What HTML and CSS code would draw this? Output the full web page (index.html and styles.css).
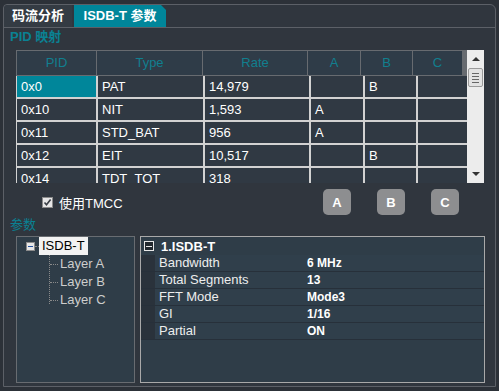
FILE: index.html
```html
<!DOCTYPE html>
<html lang="zh">

<head>
    <meta charset="utf-8">
    <meta name="viewport" content="width=device-width, initial-scale=1">
    <title>ISDB-T 参数</title>
    <link rel="stylesheet" href="styles.css">
</head>

<body>
    <div class="frame">
        <div class="tabs">
            <div class="tab">码流分析</div>
            <div class="tab active">ISDB-T 参数</div>
        </div>
        <div class="content">
            <div class="section-title">PID 映射</div>
            <div class="pid-table">
                <div class="grid-wrap">
                    <div class="grid head">
                        <div>PID</div>
                        <div>Type</div>
                        <div>Rate</div>
                        <div>A</div>
                        <div>B</div>
                        <div>C</div>
                    </div>
                    <div class="grid body">
                        <div class="selected">0x0</div><div>PAT</div><div>14,979</div><div></div><div>B</div><div></div>
                        <div>0x10</div><div>NIT</div><div>1,593</div><div>A</div><div></div><div></div>
                        <div>0x11</div><div>STD_BAT</div><div>956</div><div>A</div><div></div><div></div>
                        <div>0x12</div><div>EIT</div><div>10,517</div><div></div><div>B</div><div></div>
                        <div>0x14</div><div>TDT_TOT</div><div>318</div><div></div><div></div><div></div>
                    </div>
                </div>
                <div class="scrollbar">
                    <span class="arrow up"></span>
                    <span class="thumb"><i></i><i></i><i></i><i></i></span>
                    <span class="arrow down"></span>
                </div>
            </div>
            <div class="tmcc-row">
                <label class="check"><span class="box">
                    <svg width="9" height="9" viewBox="0 0 9 9"><path d="M1.5 4.5 L3.5 6.8 L7.6 1.6" fill="none" stroke="#3a3f46" stroke-width="1.6"/></svg>
                </span>使用TMCC</label>
                <div class="layer-buttons">
                    <button>A</button>
                    <button>B</button>
                    <button>C</button>
                </div>
            </div>
            <div class="section-title small">参数</div>
            <div class="bottom">
                <div class="tree">
                    <div class="tree-root">
                        <span class="toggle"></span><span class="dots"></span><span class="root-label">ISDB-T</span>
                    </div>
                    <ul class="tree-children">
                        <li>Layer A</li>
                        <li>Layer B</li>
                        <li>Layer C</li>
                    </ul>
                </div>
                <div class="details">
                    <div class="details-head"><span class="toggle dark"></span>1.ISDB-T</div>
                    <div class="row"><span></span><span>Bandwidth</span><b>6 MHz</b></div>
                    <div class="row"><span></span><span>Total Segments</span><b>13</b></div>
                    <div class="row"><span></span><span>FFT Mode</span><b>Mode3</b></div>
                    <div class="row"><span></span><span>GI</span><b>1/16</b></div>
                    <div class="row"><span></span><span>Partial</span><b>ON</b></div>
                </div>
            </div>
        </div>
    </div>
</body>

</html>
```

FILE: styles.css
```css
body {
    margin: 0;
    padding: 4px 3px 0;
    background-color: #2c3138;
    font-family: "Liberation Sans", "Noto Sans CJK SC", sans-serif;
    font-size: 13px;
    color: #ffffff;
}

.frame {
    box-sizing: border-box;
    height: 383px;
    border: 1px solid #5c6067;
    border-radius: 4px 6px 0 0;
    background-color: #30363e;
}

.tabs {
    display: flex;
    gap: 2px;
    height: 22px;
    border-bottom: 1px solid #5c6067;
}

.tab {
    width: 68px;
    line-height: 22px;
    text-align: center;
    font-weight: bold;
    background-color: #343b43;
    border-top-left-radius: 4px;
}

.tab.active {
    width: 92px;
    background-color: #00869a;
    border-radius: 0;
    clip-path: polygon(0 0, calc(100% - 5px) 0, 100% 5px, 100% 100%, 0 100%);
}

.content {
    padding-left: 6px;
}

.section-title {
    height: 22px;
    line-height: 18px;
    font-weight: bold;
    color: #0a8193;
}

.section-title.small {
    height: 17px;
    line-height: 12px;
    font-weight: normal;
}

.pid-table {
    display: flex;
    width: 468px;
    height: 133px;
    margin-left: 6px;
    overflow: hidden;
}

.grid-wrap {
    width: 451px;
}

.grid {
    display: grid;
    grid-template-columns: 79px 105px 104px 52px 51px 49px;
}

.grid.head {
    gap: 1px;
    padding: 1px 0 1px 1px;
    background-color: #676b70;
}

.grid.head div {
    height: 24px;
    line-height: 24px;
    text-align: center;
    color: #117f8f;
    background-color: #2f3c48;
}

.grid.body {
    gap: 2px;
    padding-left: 1px;
    padding-top: 0;
    background-color: #d2d2d2;
}

.grid.body div {
    height: 21px;
    line-height: 21px;
    padding-left: 4px;
    background-color: #303943;
}

.grid.body div.selected {
    background-color: #00869a;
}

.scrollbar {
    position: relative;
    width: 17px;
    background-color: #ececec;
}

.arrow {
    position: absolute;
    left: 5px;
    width: 0;
    height: 0;
    border-left: 4px solid transparent;
    border-right: 4px solid transparent;
}

.arrow.up {
    top: 7px;
    border-bottom: 4px solid #333333;
}

.arrow.down {
    bottom: 7px;
    border-top: 4px solid #333333;
}

.thumb {
    position: absolute;
    top: 18px;
    left: 1px;
    box-sizing: border-box;
    width: 15px;
    height: 19px;
    border: 1px solid #9a9a9a;
    border-radius: 2px;
    background-color: #e2e2e2;
    display: flex;
    flex-direction: column;
    justify-content: center;
    gap: 2px;
    padding: 0 3px;
}

.thumb i {
    height: 1px;
    background-color: #666666;
}

.tmcc-row {
    display: flex;
    align-items: center;
    height: 36px;
    padding-top: 2px;
    box-sizing: border-box;
}

.check {
    display: flex;
    align-items: center;
    gap: 6px;
    width: 281px;
    margin-left: 32px;
}

.check .box {
    display: flex;
    align-items: center;
    justify-content: center;
    box-sizing: border-box;
    width: 11px;
    height: 11px;
    border: 1px solid #8a8a8a;
    background-color: #e6e6e6;
}

.layer-buttons {
    display: flex;
    gap: 26px;
}

.layer-buttons button {
    width: 28px;
    height: 26px;
    padding: 0;
    border: none;
    border-radius: 5px;
    background-color: #8d8e90;
    color: #ffffff;
    font-family: inherit;
    font-size: 13px;
    font-weight: bold;
}

.bottom {
    display: flex;
    gap: 5px;
    height: 147px;
    margin-left: 6px;
}

.tree {
    box-sizing: border-box;
    width: 119px;
    border: 1px solid #686c71;
    background-color: #2f3d48;
}

.tree-root {
    display: flex;
    align-items: center;
    padding-left: 9px;
    height: 18px;
}

.toggle {
    position: relative;
    box-sizing: border-box;
    width: 9px;
    height: 9px;
    border: 1px solid #8c8c8c;
    background-color: #e8e8e8;
}

.toggle::after {
    content: "";
    position: absolute;
    left: 1px;
    right: 1px;
    top: 3px;
    height: 1px;
    background-color: #2050a0;
}

.dots {
    width: 4px;
    border-top: 1px dotted #8a8a8a;
}

.root-label {
    padding: 0 3px;
    line-height: 18px;
    color: #000000;
    background-color: #f2f2f2;
}

.tree-children {
    list-style: none;
    margin: 0 0 0 32px;
    padding: 0;
    border-left: 1px dotted #8a8a8a;
    height: 49px;
}

.tree-children li {
    position: relative;
    height: 18px;
    line-height: 18px;
    padding-left: 10px;
    color: #cdcdcd;
}

.tree-children li::before {
    content: "";
    position: absolute;
    left: 0;
    top: 9px;
    width: 8px;
    border-top: 1px dotted #8a8a8a;
}

.details {
    box-sizing: border-box;
    width: 345px;
    border: 1px solid #a9a9a9;
    background-color: #2f3d48;
}

.details-head {
    display: flex;
    align-items: center;
    gap: 7px;
    height: 18px;
    padding-left: 3px;
    font-weight: bold;
}

.toggle.dark {
    width: 10px;
    height: 10px;
    border: 1px solid #e8e8e8;
    background-color: #22282e;
}

.toggle.dark::after {
    top: 3.5px;
    background-color: #e8e8e8;
}

.row {
    display: grid;
    grid-template-columns: 14px 148px 1fr;
    height: 17px;
    line-height: 16px;
}

.row span,
.row b {
    border-bottom: 1px solid #27303a;
    background-color: #303f4b;
}

.row span:first-child {
    background-color: #2a323b;
}

.row span:nth-child(2) {
    padding-left: 4px;
    color: #ededed;
}

.row b {
    padding-left: 4px;
    font-size: 12px;
}
```
